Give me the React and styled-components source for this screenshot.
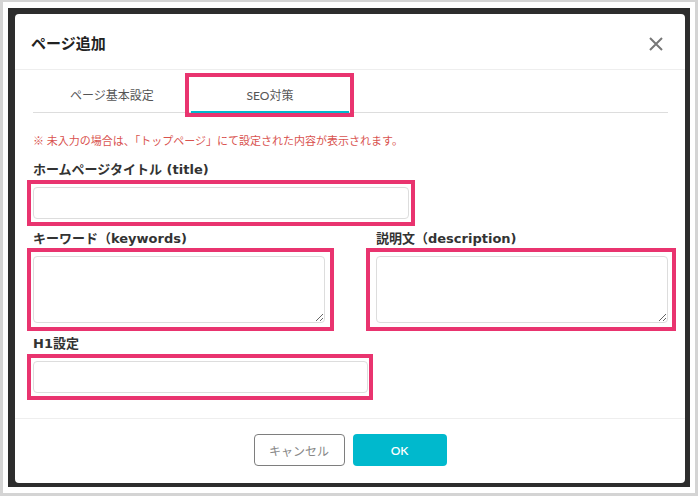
import React from "react";
import styled, { createGlobalStyle, css } from "styled-components";

const PINK = "#e9346f";
const TEAL = "#00b9cd";

const GlobalStyle = createGlobalStyle`
  html, body { margin: 0; padding: 0; background: #fff; }
  body { font-family: "Lato", "Noto Sans CJK JP", sans-serif; }
  * { box-sizing: border-box; }
`;

const Frame = styled.div`
  width: 698px;
  height: 496px;
  border-style: solid;
  border-color: #d4d4d4;
  border-width: 2px 3px 3px 3px;
  padding: 6px 5px 6px 5px;
  background: #fff;
  display: flex;
`;

const Backdrop = styled.div`
  flex: 1;
  display: flex;
  background: #2d2d2d;
  padding: 6px 5px 4px 7px;
`;

const Modal = styled.div`
  flex: 1;
  display: flex;
  flex-direction: column;
  background: #fff;
  border-radius: 4px;
`;

const Header = styled.div`
  height: 56px;
  padding: 2px 22px 0 16px;
  display: flex;
  align-items: center;
  justify-content: space-between;
  border-bottom: 1px solid #eeeeee;
`;

const Title = styled.h2`
  margin: 0;
  font-size: 15px;
  font-weight: 700;
  color: #222;
`;

const CloseButton = styled.button`
  border: none;
  background: none;
  padding: 0;
  margin-top: 2px;
  width: 14px;
  height: 14px;
  display: flex;
  cursor: pointer;
`;

const Body = styled.div`
  flex: 1;
  padding: 7px 17px 0 18px;
`;

const TabList = styled.div`
  display: flex;
  border-bottom: 1px solid #dddddd;
`;

const highlight = css`
  position: relative;
  &::after {
    content: "";
    position: absolute;
    top: ${(p) => p.$hl[0]}px;
    right: ${(p) => p.$hl[1]}px;
    bottom: ${(p) => p.$hl[2]}px;
    left: ${(p) => p.$hl[3]}px;
    border: 4px solid ${PINK};
    pointer-events: none;
  }
`;

const Tab = styled.div`
  width: 158px;
  height: 36px;
  margin-bottom: -1px;
  display: flex;
  align-items: center;
  justify-content: center;
  font-size: 12px;
  color: #555;
  border-bottom: 2px solid ${(p) => (p.$active ? TEAL : "transparent")};
  ${(p) => p.$hl && highlight}
`;

const Notice = styled.p`
  margin: 20px 0 12px;
  font-size: 11px;
  line-height: 16px;
  color: #d9534f;
`;

const Field = styled.div`
  margin-bottom: ${(p) => p.$mb ?? 0}px;
`;

const FieldLabel = styled.label`
  display: block;
  font-family: "DejaVu Sans", "Noto Sans CJK JP", sans-serif;
  font-size: 13px;
  font-weight: 700;
  line-height: 18px;
  color: #333;
  margin-bottom: 8px;
`;

const Highlight = styled.div`
  width: fit-content;
  ${highlight}
`;

const TextInput = styled.input`
  display: block;
  width: ${(p) => p.$w}px;
  height: 32px;
  border: 1px solid #dddddd;
  border-radius: 4px;
  font: inherit;
  padding: 0 8px;
  outline: none;
`;

const TextArea = styled.textarea`
  display: block;
  width: 292px;
  height: 67px;
  border: 1px solid #dddddd;
  border-radius: 4px;
  font: inherit;
  outline: none;
`;

const Row = styled.div`
  display: grid;
  grid-template-columns: 292px 292px;
  column-gap: 51px;
  margin-bottom: 12px;
`;

const Footer = styled.div`
  border-top: 1px solid #eeeeee;
  padding: 15px 0 17px;
  display: flex;
  justify-content: center;
  gap: 8px;
`;

const Button = styled.button`
  height: 32px;
  width: ${(p) => (p.$primary ? 94 : 91)}px;
  border-radius: 4px;
  font-family: inherit;
  font-size: 12px;
  cursor: pointer;
  ${(p) =>
    p.$primary
      ? css`
          background: ${TEAL};
          color: #fff;
          border: none;
          font-weight: 600;
        `
      : css`
          background: #fff;
          color: #888;
          border: 1px solid #7e7e7e;
        `}
`;

export default function App() {
  return (
    <>
      <GlobalStyle />
      <Frame>
        <Backdrop>
          <Modal>
            <Header>
              <Title>ページ追加</Title>
              <CloseButton aria-label="close">
                <svg width="14" height="14" viewBox="0 0 14 14">
                  <path d="M1 1L13 13M13 1L1 13" stroke="#777" strokeWidth="2" />
                </svg>
              </CloseButton>
            </Header>
            <Body>
              <TabList>
                <Tab>ページ基本設定</Tab>
                <Tab $active $hl={[-4, -5, -6, -6]}>SEO対策</Tab>
              </TabList>
              <Notice>※ 未入力の場合は、「トップページ」にて設定された内容が表示されます。</Notice>
              <Field $mb={11}>
                <FieldLabel>ホームページタイトル (title)</FieldLabel>
                <Highlight $hl={[-7, -6, -7, -6]}>
                  <TextInput $w={376} />
                </Highlight>
              </Field>
              <Row>
                <Field>
                  <FieldLabel>キーワード（keywords)</FieldLabel>
                  <Highlight $hl={[-8, -9, -8, -6]}>
                    <TextArea />
                  </Highlight>
                </Field>
                <Field>
                  <FieldLabel>説明文（description)</FieldLabel>
                  <Highlight $hl={[-8, -8, -8, -10]}>
                    <TextArea />
                  </Highlight>
                </Field>
              </Row>
              <Field>
                <FieldLabel>H1設定</FieldLabel>
                <Highlight $hl={[-7, -5, -7, -6]}>
                  <TextInput $w={335} />
                </Highlight>
              </Field>
            </Body>
            <Footer>
              <Button>キャンセル</Button>
              <Button $primary>OK</Button>
            </Footer>
          </Modal>
        </Backdrop>
      </Frame>
    </>
  );
}
